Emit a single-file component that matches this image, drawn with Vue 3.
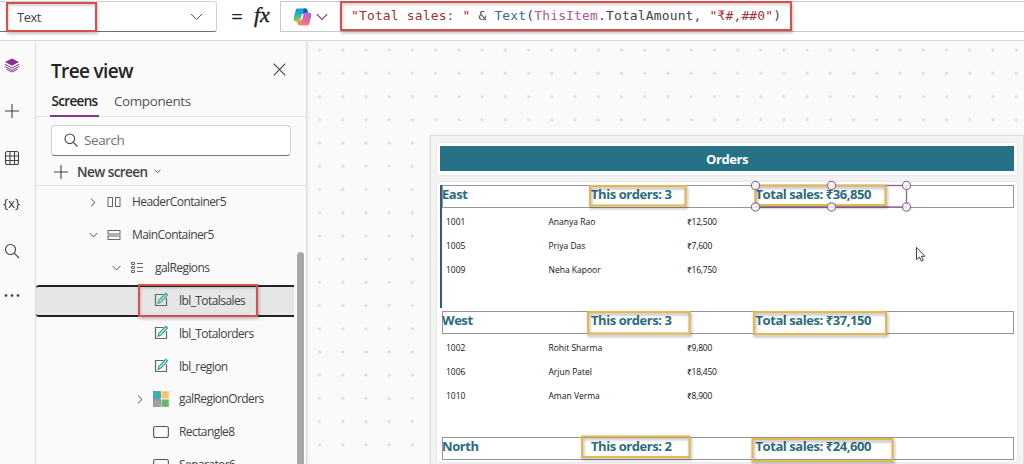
<template>
  <div class="studio">
    <header class="formula-bar">
      <div class="property-select">
        <span>Text</span>
        <svg class="chevron" width="13" height="8" viewBox="0 0 13 8"><path d="M1 1l5.5 5.5L12 1" /></svg>
      </div>
      <span class="equals">=</span>
      <span class="fx">fx</span>
      <div class="formula-box">
        <svg class="copilot" width="19" height="18" viewBox="0 0 18 17">
          <defs>
            <linearGradient id="cpBlue" x1="0" y1="0" x2="0.3" y2="1">
              <stop offset="0" stop-color="#1b8fd8" />
              <stop offset="0.5" stop-color="#27b3b4" />
              <stop offset="1" stop-color="#b9cf3c" />
            </linearGradient>
            <linearGradient id="cpPink" x1="0.8" y1="0" x2="0.2" y2="1">
              <stop offset="0" stop-color="#a566e0" />
              <stop offset="0.5" stop-color="#e565a4" />
              <stop offset="1" stop-color="#fa9150" />
            </linearGradient>
          </defs>
          <path d="M4.5 0.5h7c1.3 0 1.8.9 2.2 2L14.3 4.5h-2.6c-1.3 0-1.9.7-2.3 2L8 11c-.4 1.3-1 2-2.4 2H2.8C1 13 .2 11.6.7 9.8L2.5 2.3C2.8 1.2 3.4.5 4.5.5z" fill="url(#cpBlue)" />
          <path d="M10 .5h1.8c1.2 0 1.7.8 2 2l.6 2h-2.7c-.9 0-1.5.4-2 1.3z" fill="#1c50c4" />
          <path d="M13.5 16.5h-7c-1.3 0-1.8-.9-2.2-2L3.7 12.8h2.2c1.3 0 1.9-.7 2.3-2L9.6 6.5c.4-1.4 1-2.1 2.4-2.1h3.2c1.8 0 2.6 1.3 2.1 3.1l-1.8 7.2c-.3 1.1-.9 1.8-2 1.8z" fill="url(#cpPink)" />
          <path d="M8.4 6h1.5L8.6 11H7z" fill="#fff" />
        </svg>
        <svg class="chevron purple" width="12" height="8" viewBox="0 0 13 8"><path d="M1 1l5.5 5.5L12 1" /></svg>
        <code class="formula"><span
          v-for="(token, i) in formula"
          :key="i"
          :class="token.type"
        >{{ token.text }}</span></code>
      </div>
      <div class="mark red mark-property"></div>
      <div class="mark red mark-formula"></div>
    </header>

    <div class="workspace">
      <nav class="rail">
        <svg width="16" height="16" viewBox="0 0 16 16">
          <path d="M8 1.5l7 3.5-7 3.8L1 5z" fill="#8a2f91" />
          <path d="M1 7.3l7 3.7 7-3.7M1 9.6l7 3.7 7-3.7M2.5 12.3L8 15l5.5-2.7" fill="none" stroke="#8a2f91" />
        </svg>
        <svg width="16" height="16" viewBox="0 0 16 16"><path d="M8 1v14M1 8h14" class="line" /></svg>
        <svg width="16" height="16" viewBox="0 0 16 16">
          <rect x="1.5" y="1.5" width="13" height="13" rx="2" class="line" />
          <path d="M6 1.5v13M10.5 1.5v13M1.5 6h13M1.5 10.5h13" class="line" />
        </svg>
        <span class="variables">{x}</span>
        <svg width="16" height="16" viewBox="0 0 16 16">
          <circle cx="6.5" cy="6.5" r="5" class="line" /><path d="M10.2 10.2L15 15" class="line" />
        </svg>
        <svg width="16" height="16" viewBox="0 0 16 16">
          <g fill="#333"><circle cx="2" cy="6.5" r="1.3" /><circle cx="8" cy="6.5" r="1.3" /><circle cx="14" cy="6.5" r="1.3" /></g>
        </svg>
      </nav>

      <aside class="tree-panel">
        <div class="panel-title">
          <h2>Tree view</h2>
          <svg width="13" height="13" viewBox="0 0 13 13"><path d="M.7.7l11.6 11.6M12.3.7L.7 12.3" class="line" /></svg>
        </div>
        <div class="tabs">
          <button class="active">Screens</button>
          <button class="second">Components</button>
        </div>
        <div class="search">
          <svg width="14" height="14" viewBox="0 0 14 14">
            <circle cx="5.8" cy="5.8" r="4.8" class="line" /><path d="M9.3 9.3L13.5 13.5" class="line" />
          </svg>
          <span>Search</span>
        </div>
        <div class="new-screen">
          <svg width="14" height="14" viewBox="0 0 14 14"><path d="M7 0v14M0 7h14" class="line" /></svg>
          <span>New screen</span>
          <svg class="chevron" width="7" height="5" viewBox="0 0 7 5"><path d="M.5.7l3 3 3-3" /></svg>
        </div>
        <div class="tree">
          <div
            v-for="node in nodes"
            :key="node.name"
            class="node"
            :class="['level-' + node.level, { selected: node.selected }]"
          >
            <span class="toggle">
              <svg v-if="node.toggle === 'closed'" class="chevron" width="6" height="9" viewBox="0 0 6 9"><path d="M1 .7l4 3.8-4 3.8" /></svg>
              <svg v-if="node.toggle === 'open'" class="chevron" width="9" height="6" viewBox="0 0 9 6"><path d="M.7 1l3.8 4 3.8-4" /></svg>
            </span>
            <svg class="kind" width="16" height="16" viewBox="0 0 16 16">
              <g v-if="node.kind === 'columns'" class="thin">
                <rect x="2" y="3.5" width="4.5" height="9" /><rect x="9.5" y="3.5" width="4.5" height="9" />
              </g>
              <g v-else-if="node.kind === 'rows'" class="thin">
                <rect x="2" y="3.5" width="12" height="3.5" /><rect x="2" y="9" width="12" height="3.5" />
              </g>
              <g v-else-if="node.kind === 'list'" class="thin">
                <path d="M8 3.5h6M8 7.5h6M8 11.5h6" />
                <path d="M2.5 2.5h3v2h-3zM2.5 6.5h3v2h-3zM2.5 10.5h3v2h-3z" />
              </g>
              <g v-else-if="node.kind === 'label'">
                <path d="M10.5 2.5h-8v11h11V6" fill="none" stroke="#666" stroke-width="1.2" />
                <path d="M5 11.3l.8-2.8 7-7.2 1.7 1.7-7 7.3z" fill="#d4f0ec" stroke="#25a092" stroke-width="1.1" />
              </g>
              <g v-else-if="node.kind === 'gallery'">
                <rect x=".5" y=".5" width="7" height="7" fill="#3fb0b4" stroke="#268f95" stroke-width=".6" />
                <rect x="8.5" y=".2" width="7.3" height="7.3" fill="#fcc36b" />
                <rect x=".5" y="8.5" width="7" height="7" fill="#a0a0a0" stroke="#777" stroke-width=".6" />
                <rect x="8.5" y="8.5" width="7.3" height="7.3" fill="#68b867" />
              </g>
              <rect v-else x=".6" y="2.5" width="14.8" height="11" rx="2" fill="none" stroke="#555" stroke-width="1.1" />
            </svg>
            <span class="name">{{ node.name }}</span>
          </div>
          <div class="mark red mark-node"></div>
          <div class="scroll-thumb"></div>
        </div>
      </aside>

      <main class="canvas">
        <section class="app-screen">
          <div class="title-card"><div class="title">Orders</div></div>
          <div class="gallery">
            <article v-for="region in regions" :key="region.name" class="region">
              <div class="region-head">
                <b>{{ region.name }}</b>
                <b>This orders: {{ region.count }}</b>
                <b>Total sales: ₹{{ region.total }}</b>
              </div>
              <div v-for="order in region.orders" :key="order[0]" class="order">
                <span>{{ order[0] }}</span>
                <span>{{ order[1] }}</span>
                <span class="amount">₹{{ order[2] }}</span>
              </div>
            </article>
            <div class="active-bar"></div>
          </div>
        </section>
      </main>
    </div>

    <!-- control selection, callouts and pointer float over the canvas -->
    <svg class="overlay" width="1024" height="464" viewBox="0 0 1024 464">
      <rect x="755.5" y="185.5" width="151" height="21.5" fill="none" stroke="#8b5f96" stroke-width="1.3" />
      <g class="callouts">
        <rect v-for="(box, i) in callouts" :key="i" :x="box[0]" :y="box[1]" :width="box[2]" :height="box[3]" />
      </g>
      <circle v-for="(dot, i) in handles" :key="'h' + i" :cx="dot[0]" :cy="dot[1]" r="4.1" class="handle" />
      <path d="M916.5 247.3v12.3l2.9-2.6 2 4.2 1.9-.9-1.9-4h3.4z" fill="#fff" stroke="#444" />
    </svg>
  </div>
</template>

<script setup>
const formula = [
  { text: '"Total sales: "', type: 'string' },
  { text: ' & ', type: 'plain' },
  { text: 'Text', type: 'func' },
  { text: '(', type: 'plain' },
  { text: 'ThisItem', type: 'keyword' },
  { text: '.TotalAmount, ', type: 'plain' },
  { text: '"', type: 'string' },
  { text: '₹', type: 'string rupee' },
  { text: '#,##0"', type: 'string' },
  { text: ')', type: 'plain' }
];

const nodes = [
  { name: 'HeaderContainer5', level: 1, kind: 'columns', toggle: 'closed' },
  { name: 'MainContainer5', level: 1, kind: 'rows', toggle: 'open' },
  { name: 'galRegions', level: 2, kind: 'list', toggle: 'open' },
  { name: 'lbl_Totalsales', level: 3, kind: 'label', selected: true },
  { name: 'lbl_Totalorders', level: 3, kind: 'label' },
  { name: 'lbl_region', level: 3, kind: 'label' },
  { name: 'galRegionOrders', level: 3, kind: 'gallery', toggle: 'closed' },
  { name: 'Rectangle8', level: 3, kind: 'shape' },
  { name: 'Separator6', level: 3, kind: 'shape' }
];

const regions = [
  {
    name: 'East',
    count: 3,
    total: '36,850',
    orders: [
      ['1001', 'Ananya Rao', '12,500'],
      ['1005', 'Priya Das', '7,600'],
      ['1009', 'Neha Kapoor', '16,750']
    ]
  },
  {
    name: 'West',
    count: 3,
    total: '37,150',
    orders: [
      ['1002', 'Rohit Sharma', '9,800'],
      ['1006', 'Arjun Patel', '18,450'],
      ['1010', 'Aman Verma', '8,900']
    ]
  },
  { name: 'North', count: 2, total: '24,600', orders: [] }
];

// x, y, width, height
const callouts = [
  [590, 186, 95.5, 19.5],
  [755.5, 185.5, 130, 19.5],
  [588, 312, 101.5, 21.5],
  [754, 312, 132, 22],
  [582, 436.5, 107.5, 20.5],
  [752.5, 439, 140, 22]
];

const handles = [
  [755.5, 185.5], [831.5, 185.5], [906.5, 185.5],
  [755.5, 207], [831.5, 207], [906.5, 207]
];
</script>

<style>
body {
  margin: 0;
  overflow: hidden;
}
</style>

<style scoped>
.studio {
  position: relative;
  display: flex;
  flex-direction: column;
  width: 1024px;
  height: 464px;
  overflow: hidden;
  box-sizing: border-box;
  background: #fafafa;
  color: #424242;
  font-family: "Open Sans", "Noto Sans", sans-serif;
  font-size: 14px;
}

.studio * {
  box-sizing: border-box;
}

.chevron {
  fill: none;
  stroke: #555;
  stroke-width: 1;
}

.chevron.purple {
  stroke: #8a4a9c;
  stroke-width: 1.3;
}

.line {
  fill: none;
  stroke: #424242;
  stroke-width: 1.1;
}

.thin {
  fill: none;
  stroke: #666;
  stroke-width: 1;
}

/* formula bar */
.formula-bar {
  position: relative;
  display: flex;
  flex: none;
  align-items: flex-start;
  height: 41px;
  padding-top: 1px;
  background: #fff;
  border-bottom: 1px solid #d8d8d8;
}

.property-select {
  display: flex;
  align-items: center;
  justify-content: space-between;
  width: 217px;
  height: 31px;
  padding: 0 13px 0 17px;
  border: 1px solid #d1d1d1;
  border-left: none;
  border-bottom-color: #707070;
  border-radius: 0 3px 3px 0;
  font-size: 13px;
  letter-spacing: -0.5px;
}

.equals {
  width: 36px;
  padding-left: 14px;
  color: #222;
  font-size: 21px;
  line-height: 31px;
}

.fx {
  width: 27px;
  padding-left: 1px;
  color: #222;
  font-family: "Liberation Serif", serif;
  font-size: 22px;
  font-style: italic;
  line-height: 28px;
  -webkit-text-stroke: 0.4px #222;
}

.formula-box {
  display: flex;
  flex: 1;
  align-items: center;
  height: 31px;
  padding-left: 12px;
  border: 1px solid #c8c8c8;
  border-right: none;
}

.copilot {
  margin-right: 4px;
}

.formula {
  padding: 0 0 3px 23px;
  font-family: "DejaVu Sans Mono", monospace;
  font-size: 13px;
  letter-spacing: 0.14px;
  white-space: pre;
}

.string {
  color: #a33035;
}

.plain {
  color: #444;
}

.func {
  color: #3d6796;
}

.keyword {
  color: #b0569b;
}

.rupee {
  display: inline-block;
  width: 7.97px;
}

.mark {
  position: absolute;
  box-shadow: 1px 2px 3px rgba(0, 0, 0, 0.25), inset 1px 2px 3px rgba(0, 0, 0, 0.18);
}

.red {
  border: 2px solid #d6504f;
}

.mark-property {
  left: 6px;
  top: 2px;
  width: 91px;
  height: 30px;
}

.mark-formula {
  left: 340px;
  top: 1px;
  width: 452px;
  height: 30px;
}

/* left rail */
.workspace {
  display: flex;
  flex: 1;
  min-height: 0;
}

.rail {
  display: flex;
  flex-direction: column;
  align-items: center;
  gap: 30.4px;
  width: 36px;
  padding: 16px 12px 0 0;
  border-right: 1px solid #e0e0e0;
}

.rail > * {
  flex: none;
}

.variables {
  height: 16px;
  color: #333;
  font-size: 13.5px;
  line-height: 15px;
}

/* tree panel */
.tree-panel {
  display: flex;
  flex-direction: column;
  width: 271px;
  border-right: 1px solid #d9d9d9;
  box-shadow: 1px 0 3px rgba(0, 0, 0, 0.08);
}

.panel-title {
  display: flex;
  flex: none;
  align-items: center;
  justify-content: space-between;
  height: 44px;
  padding: 13px 20px 0 15px;
}

h2 {
  margin: 0;
  padding-top: 2px;
  color: #242424;
  font-size: 19px;
  font-weight: 600;
  letter-spacing: -0.65px;
}

.tabs {
  display: flex;
  flex: none;
  height: 32px;
  padding-left: 14px;
  gap: 15px;
  border-bottom: 1px solid #e0e0e0;
}

.tabs button {
  height: 32px;
  padding: 2px 0 0;
  border: none;
  border-bottom: 2px solid transparent;
  background: none;
  color: #555;
  font-family: inherit;
  font-size: 13.5px;
  letter-spacing: -0.42px;
}

.tabs .active {
  width: 49px;
  border-bottom-color: #82398f;
  color: #242424;
  font-weight: 600;
  letter-spacing: -0.67px;
}

.search {
  display: flex;
  flex: none;
  align-items: center;
  gap: 6px;
  height: 31px;
  margin: 8px 15px 0 15px;
  padding: 0 0 1px 12px;
  background: #fff;
  border: 1px solid #d1d1d1;
  border-bottom-color: #777;
  border-radius: 4px;
  color: #707070;
  font-size: 13.5px;
  letter-spacing: -0.4px;
}

.new-screen {
  display: flex;
  flex: none;
  align-items: center;
  height: 30px;
  padding: 2px 0 0 18px;
  border-bottom: 1px solid #e0e0e0;
  font-size: 13.5px;
  font-weight: 600;
  letter-spacing: -0.55px;
}

.new-screen span {
  width: 71px;
  margin: 0 6px 0 9px;
  white-space: nowrap;
}

.tree {
  position: relative;
  flex: 1;
  min-height: 0;
  overflow: hidden;
}

.node {
  display: flex;
  align-items: center;
  height: 32.85px;
  margin-right: 12px;
  font-size: 12px;
  letter-spacing: -0.58px;
}

.name {
  padding-bottom: 1px;
}

.level-1 {
  padding-left: 50px;
}

.level-2 {
  padding-left: 73px;
}

.level-3 {
  padding-left: 97px;
}

.selected {
  background: #e6e6e6;
  border: solid #222;
  border-width: 2px 0;
  border-radius: 3px 0 0 3px;
}

.toggle {
  display: flex;
  justify-content: center;
  width: 14px;
}

.kind {
  margin: 0 10px 1px 6px;
}

.mark-node {
  left: 102px;
  top: 98px;
  width: 120px;
  height: 33px;
}

.scroll-thumb {
  position: absolute;
  right: 2px;
  top: 66px;
  width: 7px;
  height: 260px;
  background: #a8a8a8;
  border-radius: 4px;
}

/* design canvas */
.canvas {
  flex: 1;
  padding: 94px 0 0 123px;
  background-image: radial-gradient(circle, #dcdcdc 1.2px, transparent 1.8px);
  background-position: 1px -2.5px;
  background-size: 23.23px 23.23px;
}

.app-screen {
  width: 594px;
  height: 340px;
  padding: 7px 6px 0;
  background: #f3f3f3;
  border: 1px solid #e0e0e0;
  box-shadow: 0 0 3px rgba(0, 0, 0, 0.1);
}

.title-card {
  height: 32px;
  padding: 3px 3px 4px;
  background: #fff;
  border-radius: 2px;
  box-shadow: 0 0 2px rgba(0, 0, 0, 0.15);
}

.title {
  height: 25px;
  background: #277186;
  color: #fff;
  font-size: 13px;
  font-weight: 700;
  letter-spacing: -0.45px;
  line-height: 26px;
  text-align: center;
}

.gallery {
  position: relative;
  height: 280px;
  margin-top: 7px;
  padding: 3px 3px 0 5px;
  overflow: hidden;
  background: #fff;
  border-radius: 3px;
  box-shadow: 0 0 2px rgba(0, 0, 0, 0.15);
}

.region {
  height: 126px;
}

.region-head {
  display: grid;
  grid-template-columns: 149px 164.5px 1fr;
  height: 23px;
  margin-bottom: 2px;
  border: 1px solid #9b939b;
  color: #2c6b7c;
  font-size: 13px;
  letter-spacing: -0.44px;
  line-height: 17px;
  white-space: nowrap;
}

.region-head b {
  margin-left: -1px;
}

.order {
  display: grid;
  grid-template-columns: 102.5px 138.5px 1fr;
  height: 24px;
  padding-left: 4px;
  color: #111;
  font-size: 8.5px;
  font-weight: 500;
  line-height: 24px;
}

.amount {
  letter-spacing: -0.25px;
}

.active-bar {
  position: absolute;
  left: 3px;
  top: 3px;
  width: 2px;
  height: 123px;
  background: #2f5d88;
}

.overlay {
  position: absolute;
  left: 0;
  top: 0;
  pointer-events: none;
}

.callouts {
  fill: none;
  stroke: #e3b84d;
  stroke-width: 2;
  filter: drop-shadow(1px 2px 1.5px rgba(0, 0, 0, 0.35));
}

.handle {
  fill: rgba(255, 255, 255, 0.8);
  stroke: #95719f;
  stroke-width: 1.3;
}
</style>
